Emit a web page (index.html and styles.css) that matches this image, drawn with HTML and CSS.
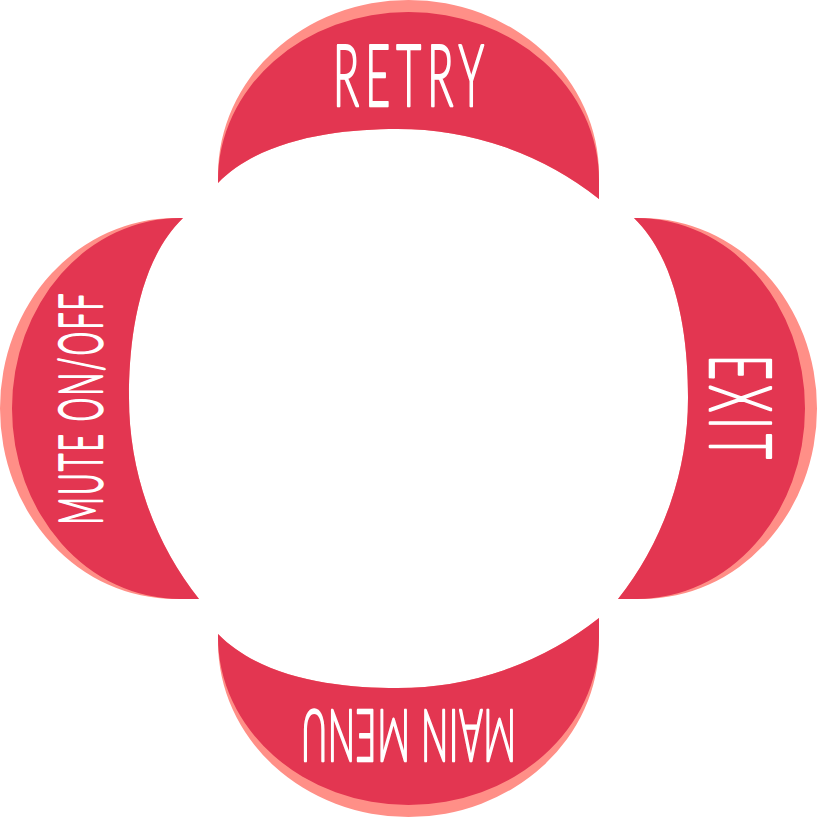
FILE: index.html
```html
<!DOCTYPE html>
<html lang="en">
<head>
    <meta charset="UTF-8">
    <meta name="viewport" content="width=device-width, initial-scale=1.0">
    <title>Pause Menu</title>
    <link rel="stylesheet" href="styles.css">
</head>
<body>
    <svg class="menu" width="817" height="817" viewBox="0 0 817 817">
        <defs>
            <g id="petal">
                <path class="petal-edge" d="M218 183 L218 175 A190.5 175 0 0 1 408.5 0 A190.5 175 0 0 1 599 175 L599 199 A324 324 0 0 0 397 129 C340 129 262 138 218 183 Z"/>
                <path class="petal-face" d="M218 183 L218 180 A190.5 168 0 0 1 408.5 12 A190.5 168 0 0 1 599 180 L599 199 A324 324 0 0 0 397 129 C340 129 262 138 218 183 Z"/>
            </g>
        </defs>

        <use href="#petal"/>
        <use href="#petal" transform="rotate(90 408.5 408.5)"/>
        <use href="#petal" transform="translate(0 817) scale(1 -1)"/>
        <use href="#petal" transform="translate(817 0) scale(-1 1) rotate(90 408.5 408.5)"/>

        <text class="label" transform="translate(408.5 106) scale(.5 1)" font-size="86" textLength="302" lengthAdjust="spacing">RETRY</text>
        <text class="label" transform="translate(710 407) rotate(90) scale(.5 1)" font-size="86" textLength="208" lengthAdjust="spacing">EXIT</text>
        <text class="label" transform="translate(408.5 710) rotate(180) scale(.5 1)" font-size="72" textLength="430" lengthAdjust="spacing">MAIN MENU</text>
        <text class="label" transform="translate(102 409) rotate(-90) scale(.5 1)" font-size="60" textLength="462" lengthAdjust="spacing">MUTE ON/OFF</text>
    </svg>
</body>
</html>
```

FILE: styles.css
```css
body {
    margin: 0;
    background-color: #fff;
}

.menu {
    display: block;
}

.petal-edge {
    fill: #ff8f87;
}

.petal-face {
    fill: #e33651;
}

.label {
    font-family: Lato, "Open Sans", sans-serif;
    font-weight: 300;
    fill: #fff;
    stroke: #fff;
    stroke-width: 2.5px;
    stroke-linejoin: round;
    vector-effect: non-scaling-stroke;
    text-anchor: middle;
    text-rendering: geometricPrecision;
}
```
